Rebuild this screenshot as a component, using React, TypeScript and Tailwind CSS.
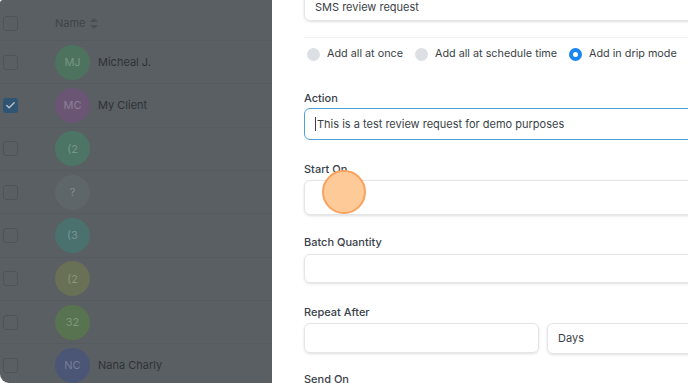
import { Check } from "lucide-react";

const rows = [
  { initials: "MJ", name: "Micheal J.", color: "bg-[#4d735f]" },
  { initials: "MC", name: "My Client", color: "bg-[#6a5575]", checked: true },
  { initials: "(2", name: "", color: "bg-[#4d7565]" },
  { initials: "?", name: "", color: "bg-[#5e6669]" },
  { initials: "(3", name: "", color: "bg-[#4a716e]" },
  { initials: "(2", name: "", color: "bg-[#687055]" },
  { initials: "32", name: "", color: "bg-[#58734f]" },
  { initials: "NC", name: "Nana Charly", color: "bg-[#4b5676]" },
];

function Box({ checked }: { checked?: boolean }) {
  if (checked) {
    return (
      <div className="ml-[3px] flex h-[15px] w-[15px] items-center justify-center rounded-[3px] bg-[#2f5474]">
        <Check className="h-[11px] w-[11px] text-[#b9c3cc]" strokeWidth={3} />
      </div>
    );
  }
  return <div className="ml-[3px] h-[15px] w-[15px] rounded-[3px] border border-[#4f5458]" />;
}

function Radio({ label, on }: { label: string; on?: boolean }) {
  return (
    <label className="flex items-center gap-[7px]">
      {on ? (
        <span className="h-[13px] w-[13px] rounded-full border-[4px] border-[#1a87f0] bg-white" />
      ) : (
        <span className="h-[13px] w-[13px] rounded-full bg-[#dcdfe4]" />
      )}
      <span>{label}</span>
    </label>
  );
}

function Label({ children, className }: { children: string; className: string }) {
  return <div className={`text-[11px] leading-[14px] font-medium text-[#3a414b] ${className}`}>{children}</div>;
}

export default function App() {
  return (
    <div className="h-[383px] w-[688px] overflow-hidden bg-white font-['Inter',sans-serif]">
      <div className="flex h-full overflow-hidden rounded-tl-[3px] rounded-bl-[9px]">
        <section className="w-[272px] shrink-0 bg-[#5a5f63]">
          <div className="flex h-[41px] items-center border-b border-[#565b5f] pt-[6px]">
            <Box />
            <div className="ml-[37px] flex items-center gap-[4px] text-[11px] text-[#3f4448]">
              Name
              <svg width="8" height="11" viewBox="0 0 8 11" className="text-[#4a4f53]">
                <path d="M4 0L8 4H0Z M4 11L0 7H8Z" fill="currentColor" />
              </svg>
            </div>
          </div>
          {rows.map((r, i) => (
            <div key={i} className="flex h-[43.33px] items-center border-b border-[#565b5f]">
              <Box checked={r.checked} />
              <div
                className={`ml-[37px] flex h-[35px] w-[35px] items-center justify-center rounded-full text-[11px] text-white/25 ${r.color}`}
              >
                {r.initials}
              </div>
              <span className="ml-[8px] text-[11px] text-[#2f3337]">{r.name}</span>
            </div>
          ))}
        </section>

        <section className="relative flex-1 overflow-hidden bg-white pl-[32px]">
          <div className="w-[478px]">
            <div className="-mt-[12px] flex h-[33px] items-center rounded-md border border-[#e3e5e8] px-[10px] pt-[5px] text-[11px] text-[#3a3f47] shadow-sm">
              SMS review request
            </div>
            <div className="mt-[16px] border-t border-[#f0f1f3]" />
            <div className="mt-[9px] flex h-[14px] items-center gap-[12px] pl-[3px] text-[10.8px] text-[#3a3f47]">
              <Radio label="Add all at once" />
              <Radio label="Add all at schedule time" />
              <Radio label="Add in drip mode" on />
            </div>

            <Label className="mt-[30px]">Action</Label>
            <div className="mt-[3px] flex h-[32px] items-center rounded-md border border-[#4ea2d9] px-[10px] text-[11px] text-[#3a3f47]">
              <span className="mr-[1px] h-[14px] w-px bg-[#3a3f47]" />
              This is a test review request for demo purposes
            </div>

            <Label className="mt-[22px]">Start On</Label>
            <div className="mt-[4px] h-[35px] rounded-md border border-[#e3e5e8] shadow-sm" />

            <Label className="mt-[20px]">Batch Quantity</Label>
            <div className="mt-[5px] h-[29px] rounded-md border border-[#e3e5e8] shadow-sm" />

            <Label className="mt-[22px]">Repeat After</Label>
            <div className="mt-[4px] grid grid-cols-2 gap-[8px]">
              <div className="h-[30px] rounded-md border border-[#e3e5e8] shadow-sm" />
              <div className="flex h-[31px] items-center rounded-md border border-[#e3e5e8] px-[10px] text-[11px] text-[#3a3f47] shadow-sm">
                Days
              </div>
            </div>

            <Label className="mt-[18px]">Send On</Label>
          </div>

          <div className="absolute left-[50px] top-[170px] h-[44px] w-[44px] rounded-full border-2 border-[#f9a25f] bg-[#fdca98]" />
        </section>
      </div>
    </div>
  );
}
